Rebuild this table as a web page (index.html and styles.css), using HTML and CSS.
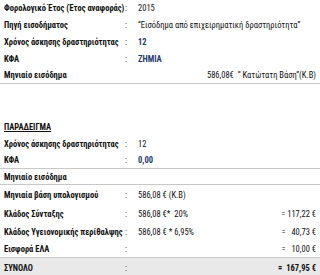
FILE: index.html
```html
<!DOCTYPE html>
<html lang="el">
<head>
<meta charset="utf-8">
<link rel="stylesheet" href="styles.css">
</head>
<body>
<div class="sheet">
  <div class="row r16"><span class="lbl">Φορολογικό Έτος (Έτος αναφοράς)</span><span class="col">:</span><span class="val">2015</span></div>
  <div class="row r17"><span class="lbl">Πηγή εισοδήματος</span><span class="col">:</span><span class="val">“Εισόδημα από επιχειρηματική δραστηριότητα”</span></div>
  <div class="row r17"><span class="lbl">Χρόνος άσκησης δραστηριότητας</span><span class="col">:</span><span class="val blue">12</span></div>
  <div class="row r17"><span class="lbl">ΚΦΑ</span><span class="col">:</span><span class="val blue">ΖΗΜΙΑ</span></div>
  <div class="row r17 bottom-line"><span class="lbl">Μηνιαίο εισόδημα</span><span class="col"></span><span class="val right">586,08€ &nbsp;“ Κατώτατη Βάση”(Κ.Β)</span></div>

  <div class="spacer"></div>

  <div class="row r17"><span class="lbl u">ΠΑΡΑΔΕΙΓΜΑ</span></div>
  <div class="row r17"><span class="lbl">Χρόνος άσκησης δραστηριότητας</span><span class="col">:</span><span class="val">12</span></div>
  <div class="row r17 bottom-line"><span class="lbl">ΚΦΑ</span><span class="col">:</span><span class="val blue">0,00</span></div>
  <div class="row r16 bottom-line"><span class="lbl">Μηνιαίο εισόδημα</span></div>
  <div class="row r20"><span class="lbl">Μηνιαία βάση υπολογισμού</span><span class="col">:</span><span class="val">586,08 € (Κ.Β)</span></div>
  <div class="row r18"><span class="lbl">Κλάδος Σύνταξης</span><span class="col">:</span><span class="val">586,08 €* &nbsp;20%</span><span class="res">= 117,22 €</span></div>
  <div class="row r17"><span class="lbl">Κλάδος Υγειονομικής περίθαλψης</span><span class="col">:</span><span class="val">586,08 € * 6,95%</span><span class="res">= &nbsp;&nbsp;40,73 €</span></div>
  <div class="row r17"><span class="lbl">Εισφορά ΕΛΑ</span><span class="col">:</span><span class="val"></span><span class="res">= &nbsp;&nbsp;10,00 €</span></div>
  <div class="row r17 total"><span class="lbl">ΣΥΝΟΛΟ</span><span class="col">:</span><span class="val"></span><span class="res b">= &nbsp;167,95 €</span></div>
</div>
</body>
</html>
```
FILE: styles.css
```css
html, body {
  margin: 0;
  padding: 0;
  background: #ffffff;
}
body {
  font-family: "Roboto Condensed", Lato, sans-serif;
  font-size: 8.5px;
  color: #111;
}
.sheet {
  width: 320px;
}
.row {
  display: grid;
  grid-template-columns: 121px 13px 1fr auto;
  align-items: center;
  padding: 0 4px;
  box-sizing: border-box;
}
.r16 { height: 16px; }
.r17 { height: 17px; }
.r18 { height: 18px; }
.r20 { height: 20px; }
.lbl {
  font-weight: 700;
  white-space: nowrap;
}
.u { text-decoration: underline; }
.col { text-align: left; }
.val { white-space: nowrap; }
.val.right { grid-column: 3 / 5; text-align: right; }
.blue { color: #1f3a6e; font-weight: 700; }
.res { text-align: right; white-space: nowrap; }
.b { font-weight: 700; }
.bottom-line { border-bottom: 1px solid #c8c8c8; }
.spacer { height: 34px; }
.total {
  background: #e9e9e9;
  border-top: 1px solid #c8c8c8;
  height: 20px;
}
```
